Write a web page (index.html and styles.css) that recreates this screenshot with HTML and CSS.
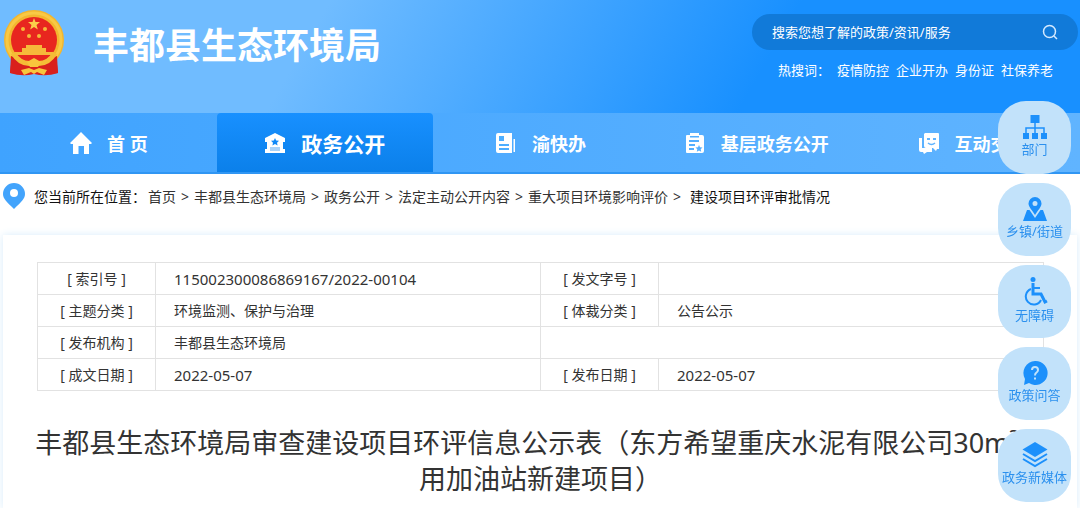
FILE: index.html
```html
<!DOCTYPE html>
<html lang="zh-CN">
<head>
<meta charset="UTF-8">
<meta name="viewport" content="width=device-width, initial-scale=1.0">
<title>丰都县生态环境局</title>
<link rel="stylesheet" href="styles.css">
</head>
<body>
<header class="header">
    <div class="banner">
        <div class="brand">
            <svg class="emblem" viewBox="0 0 62 66" aria-hidden="true">
                <path d="M9 46h44l2 17q-12 4-24 1-12 3-24-1z" fill="#d9201c"/>
                <circle cx="31" cy="30" r="30" fill="#f3b62f"/>
                <circle cx="31" cy="30" r="27" fill="none" stroke="#f8c945" stroke-width="3"/>
                <circle cx="31" cy="30" r="23" fill="#e8261f"/>
                <path d="M31 8l1.500 4h4.500l-3.500 3 1.300 4.500L31 17l-3.800 2.500 1.300-4.500L25 12h4.500z" fill="#fbd04a"/>
                <g fill="#f6b93a">
                    <circle cx="20" cy="19" r="2"/>
                    <circle cx="42" cy="19" r="2"/>
                    <circle cx="26" cy="26" r="2"/>
                    <circle cx="36" cy="26" r="2"/>
                    <path d="M23 35h16v3h4v4h7v3H12v-3h7v-4h4z"/>
                </g>
                <path d="M8 46q10 3 17 8h12q7-5 17-8l1 17-9 1-6-5-9 4-9-4-6 5-9-1z" fill="#d9201c"/>
                <path d="M10 43q8 13 21 10 13 3 21-10" fill="none" stroke="#f5bc36" stroke-width="5"/>
                <path d="M24 52l7-4 7 4-3 5h-8zM18 60l8-2 5 2 5-2 8 2-3 5-7-3-3 2-3-2-7 3z" fill="#f8c63d"/>
            </svg>
            <h1 class="site-name">丰都县生态环境局</h1>
        </div>
        <div class="search-area">
            <form class="search" action="#">
                <input type="text" class="search-input" aria-label="搜索" placeholder="搜索您想了解的政策/资讯/服务">
                <button type="submit" class="search-btn" aria-label="搜索">
                    <svg viewBox="0 0 16 16" width="16" height="16" fill="none" stroke="#d5eaff" stroke-width="1.500"><circle cx="7.500" cy="7.500" r="6"/><path d="M12 12l3 3"/></svg>
                </button>
            </form>
            <div class="hot">
                <span class="hot-label">热搜词：</span>
                <a href="#">疫情防控</a>
                <a href="#">企业开办</a>
                <a href="#">身份证</a>
                <a href="#">社保养老</a>
            </div>
        </div>
    </div>
    <nav class="nav">
        <a class="nav-item" href="#">
            <svg viewBox="0 0 22 22" width="22" height="22" fill="#fff"><path d="M11 0l11 11-1 1h-2v10h-5v-8H8.500v8H3V12H1l-1-1z"/></svg>
            <span>首 页</span>
        </a>
        <a class="nav-item active" href="#">
            <svg viewBox="0 0 22 22" width="22" height="22"><path d="M11 1l10 5v4h-2v7h2v4H1v-4h2v-7H1V6z" fill="#fff"/><path d="M11 6l1.200 2.500 2.800.3-2 1.900.6 2.800L11 12.100l-2.600 1.400.6-2.800-2-1.900 2.800-.3z" fill="#1089f7"/><path d="M6 15h10v4H6z" fill="#a9d2f8"/></svg>
            <span>政务公开</span>
        </a>
        <a class="nav-item" href="#">
            <svg viewBox="0 0 22 22" width="22" height="22"><path d="M3 1h14v20H3a2 2 0 0 1-2-2V3a2 2 0 0 1 2-2zM18.500 7H20v13h-1.500z" fill="#fff"/><path d="M4 4h5v5H4zM4 12h10v2H4zM4 16h10v2H4z" fill="#4daeff"/></svg>
            <span>渝快办</span>
        </a>
        <a class="nav-item" href="#">
            <svg viewBox="0 0 22 22" width="22" height="22"><path d="M3 3h3V1h9v2h3a2 2 0 0 1 2 2v14a2 2 0 0 1-2 2H3a1 1 0 0 1-1-1V4a1 1 0 0 1 1-1z" fill="#fff"/><path d="M6 4h9v1.500H6zM5 8h10v2H5zM5 12h6v2H5zM5 16h5v2H5zM15 13l1 2.200 2.500.3-1.800 1.700.5 2.500-2.200-1.200-2.200 1.200.5-2.500-1.800-1.700 2.500-.3z" fill="#54afff"/></svg>
            <span>基层政务公开</span>
        </a>
        <a class="nav-item" href="#">
            <svg viewBox="0 0 22 22" width="22" height="22"><path d="M1 6h3v10h10v4H9l-3 2-1-2H3a2 2 0 0 1-2-2z" fill="#fff"/><path d="M7 1h13a1 1 0 0 1 1 1v15h-2l-1 2-3-3H8a2 2 0 0 1-2-2V2z" fill="#fff"/><path d="M9 6h3v2H9zM15 6h3v2h-3z" fill="#5eb3ff"/><path d="M10 11q3.500 3 7 0" fill="none" stroke="#5eb3ff" stroke-width="1.500"/></svg>
            <span>互动交流</span>
        </a>
    </nav>
</header>

<div class="crumbs">
    <svg class="pin" viewBox="0 0 24 28" aria-hidden="true"><path d="M12 1a11 11 0 0 1 11 11c0 5-4 8-11 15C5 20 1 17 1 12A11 11 0 0 1 12 1z" fill="#43a4fc"/><circle cx="12" cy="11" r="4" fill="#fff"/></svg>
    <span class="crumbs-label">您当前所在位置：</span>
    <a href="#">首页</a><i>&gt;</i>
    <a href="#">丰都县生态环境局</a><i>&gt;</i>
    <a href="#">政务公开</a><i>&gt;</i>
    <a href="#">法定主动公开内容</a><i>&gt;</i>
    <a href="#">重大项目环境影响评价</a><i>&gt;</i>
    <span class="crumbs-current">建设项目环评审批情况</span>
</div>

<main class="panel">
    <table class="info">
        <colgroup>
            <col class="col-label"><col><col class="col-label"><col>
        </colgroup>
        <tr>
            <th scope="row">[ 索引号 ]</th>
            <td class="num">115002300086869167/2022-00104</td>
            <th scope="row">[ 发文字号 ]</th>
            <td></td>
        </tr>
        <tr>
            <th scope="row">[ 主题分类 ]</th>
            <td>环境监测、保护与治理</td>
            <th scope="row">[ 体裁分类 ]</th>
            <td>公告公示</td>
        </tr>
        <tr>
            <th scope="row">[ 发布机构 ]</th>
            <td>丰都县生态环境局</td>
            <td colspan="2"></td>
        </tr>
        <tr>
            <th scope="row">[ 成文日期 ]</th>
            <td class="num">2022-05-07</td>
            <th scope="row">[ 发布日期 ]</th>
            <td class="num">2022-05-07</td>
        </tr>
    </table>
    <h2 class="title">丰都县生态环境局审查建设项目环评信息公示表（东方希望重庆水泥有限公司30m³自用加油站新建项目）</h2>
</main>

<!-- floating shortcuts -->
<aside class="side">
    <a class="side-item" href="#">
        <svg viewBox="0 0 26 26" width="26" height="26" fill="#1c90fb"><path d="M8.500 1h9v8h-9zM1 19h6v6H1zM10 19h6v6h-6zM19 19h6v6h-6z"/><path d="M13 8v11M4 20v-6h18v6" fill="none" stroke="#1c90fb" stroke-width="1.500"/></svg>
        <span>部门</span>
    </a>
    <a class="side-item" href="#">
        <svg viewBox="0 0 26 26" width="26" height="26" fill="#1c90fb"><path fill-rule="evenodd" d="M13 1a6.500 6.500 0 0 1 6.500 6.500C19.500 11 16 14 13 19 10 14 6.500 11 6.500 7.500A6.500 6.500 0 0 1 13 1zm0 4a2.500 2.500 0 1 0 0 5 2.500 2.500 0 0 0 0-5z"/><path d="M5 14h2.500l5.500 8 5.500-8H21l4 11H1z"/></svg>
        <span>乡镇/街道</span>
    </a>
    <a class="side-item" href="#">
        <svg viewBox="0 0 26 30" width="26" height="30"><circle cx="11" cy="3.500" r="2.500" fill="#1c90fb"/><path d="M11 7v11h8l4 8 2-1" fill="none" stroke="#1c90fb" stroke-width="3"/><path d="M11 12h7" stroke="#1c90fb" stroke-width="2"/><path d="M9 13a8 8 0 1 0 10 11" fill="none" stroke="#1c90fb" stroke-width="2"/></svg>
        <span>无障碍</span>
    </a>
    <a class="side-item" href="#">
        <svg viewBox="0 0 26 26" width="26" height="26"><path d="M13 1a12 12 0 1 1-6 22l-5 2 1-6A12 12 0 0 1 13 1z" fill="#1c90fb"/><path d="M10 10q0-3 3-3t3 3q0 1.500-1.500 2.500T13 15.500M13 17.500v2" fill="none" stroke="#c2e2fa" stroke-width="2"/></svg>
        <span>政策问答</span>
    </a>
    <a class="side-item" href="#">
        <svg viewBox="0 0 26 26" width="26" height="26"><path d="M13 0l12.500 7.500L13 15 .5 7.500z" fill="#1c90fb"/><path d="M1 12l12 7 12-7M1 17l12 7 12-7" fill="none" stroke="#1c90fb" stroke-width="2"/></svg>
        <span>政务新媒体</span>
    </a>
</aside>
</body>
</html>
```

FILE: styles.css
```css
:root {
    --blue: #1890ff;
    --light-blue: #70bcff;
    --side: #c2e2fa;
    --line: #e2e2e2;
    --text: #333;
}

* {
    box-sizing: border-box;
}

body {
    margin: 0;
    background-color: #fff;
    color: var(--text);
    font-family: "Noto Sans", "Noto Sans CJK SC", sans-serif;
    font-size: 14px;
}

a {
    color: inherit;
    text-decoration: none;
}

.header {
    background: linear-gradient(120deg, var(--light-blue) 28%, var(--blue) 68%);
}

.banner {
    display: flex;
    justify-content: space-between;
    align-items: flex-start;
    height: 113px;
    padding: 0 2px 0 3px;
}

.brand {
    display: flex;
    align-items: flex-start;
    gap: 28px;
    padding-top: 10px;
}

.emblem {
    width: 62px;
    height: 66px;
}

.site-name {
    margin: 0;
    color: #fff;
    font-size: 36px;
    line-height: 72px;
}

.search-area {
    width: 326px;
    padding-top: 14px;
    color: #fff;
    font-size: 13px;
}

.search {
    display: flex;
    align-items: center;
    height: 36px;
    padding: 0 20px;
    border-radius: 18px;
    background-color: #117ad9;
}

.search-input {
    flex: 1;
    min-width: 0;
    padding: 0;
    border: none;
    outline: none;
    background: none;
    color: #fff;
    font: inherit;
}

.search-input::placeholder {
    color: #fff;
    opacity: 1;
}

.search-btn {
    display: flex;
    padding: 0;
    border: none;
    background: none;
    cursor: pointer;
}

.hot {
    display: flex;
    gap: 7px;
    padding: 10px 0 0 26px;
    line-height: 20px;
}

.nav {
    display: flex;
    height: 61px;
    padding-left: 1px;
    border-bottom: 2px solid #3096f3;
    background: linear-gradient(90deg, #3fa3ff, #60b4ff);
}

.nav-item {
    display: flex;
    flex: 1;
    align-items: center;
    justify-content: center;
    gap: 15px;
    color: #fff;
    font-size: 18px;
    font-weight: bold;
}

.nav-item.active {
    border-radius: 4px 4px 0 0;
    background: linear-gradient(#1890ff, #0b80ea);
    font-size: 21px;
}

.crumbs {
    display: flex;
    align-items: center;
    height: 44px;
    padding-left: 2px;
    white-space: nowrap;
}

.crumbs span {
    color: #111;
}

.crumbs i {
    margin: 0 5px;
    font-style: normal;
}

.crumbs-label {
    margin-right: 2px;
}

.crumbs-current {
    margin-left: 4px;
}

.pin {
    width: 24px;
    height: 28px;
    margin-right: 8px;
}

.panel {
    margin: 17px 3px 0;
    padding: 27px 33px 12px 34px;
    box-shadow: 0 0 8px #d8ecfb;
}

.info {
    width: 100%;
    border-collapse: collapse;
    table-layout: fixed;
}

.col-label {
    width: 118px;
}

.info th,
.info td {
    height: 32px;
    padding: 0 18px;
    border: 1px solid var(--line);
    font-weight: normal;
    line-height: 20px;
    text-align: left;
}

.info th {
    padding: 0;
    text-align: center;
}

.info .num {
    font-size: 15px;
}

.title {
    margin: 34px -8px 0;
    font-size: 27px;
    font-weight: normal;
    line-height: 36px;
    text-align: center;
}

.side {
    position: fixed;
    top: 101px;
    right: 9px;
    display: flex;
    flex-direction: column;
    gap: 9px;
}

.side-item {
    display: flex;
    flex-direction: column;
    align-items: center;
    justify-content: center;
    width: 73px;
    height: 73px;
    padding-bottom: 4px;
    border-radius: 28px;
    background-color: var(--side);
    color: #2b90ee;
    font-size: 13px;
    line-height: 18px;
    white-space: nowrap;
}
```
